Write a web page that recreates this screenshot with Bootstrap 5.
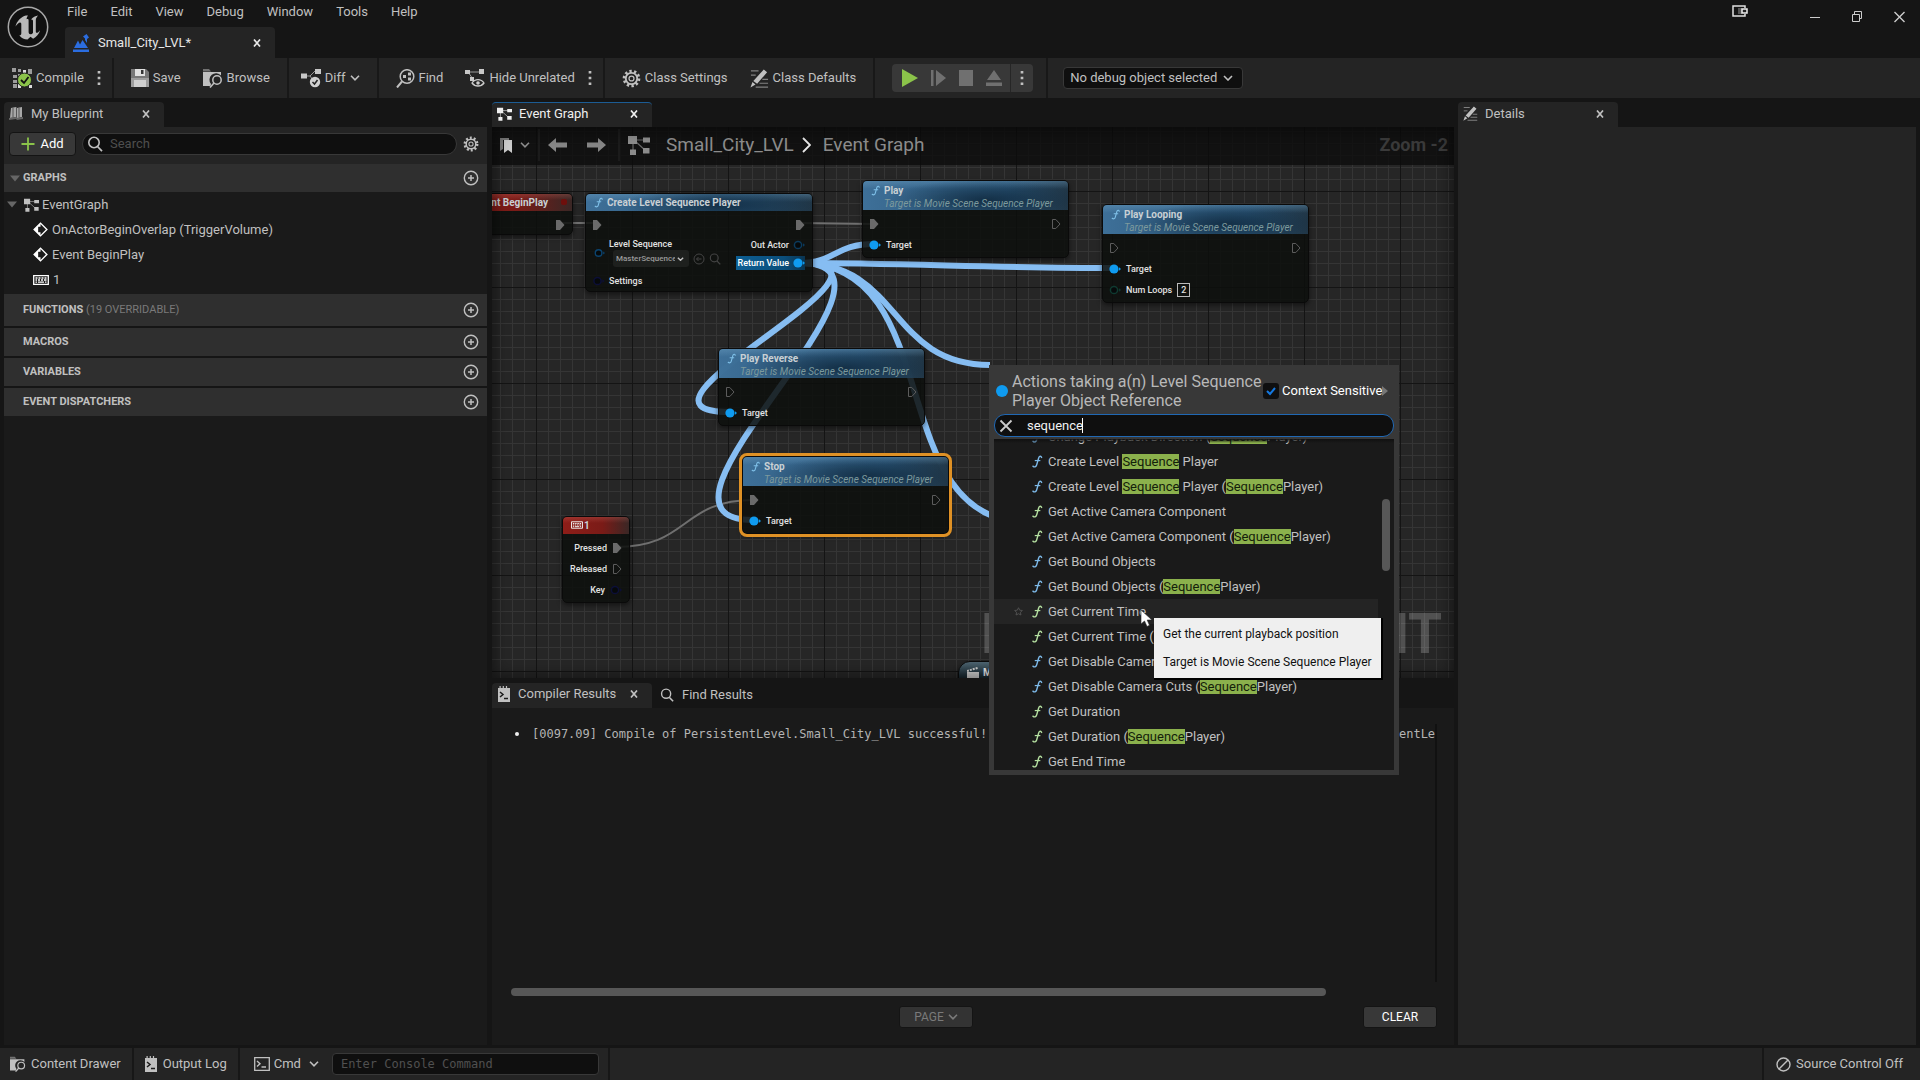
<!DOCTYPE html>
<html lang="en">
<head>
<meta charset="utf-8">
<meta name="viewport" content="width=device-width, initial-scale=1">
<title>Small_City_LVL - Level Blueprint</title>
<link href="https://cdn.jsdelivr.net/npm/bootstrap@5.3.0/dist/css/bootstrap.min.css" rel="stylesheet">
<style>
:root{--ink:#c0c0c0;--dim:#808080;--back:#151515;--panel:#242424;--recess:#1a1a1a;--head:#2f2f2f;--input:#0f0f0f;--blue:#0f9bf0}
body{font-family:Roboto,"Noto Sans",sans-serif;font-size:13px;line-height:16px;background:var(--back);color:var(--ink);height:100vh;overflow:hidden}
svg{flex:none;display:block}
button,input,select{font:inherit;color:inherit}
.plain-btn{background:none;border:0;padding:0;display:flex;align-items:center;gap:4px;white-space:nowrap}
a.menu-link{color:var(--ink);text-decoration:none}

/* title bar */
.title-bar{height:58px;position:relative}
.ue-logo{margin:6px 0 0 7px}
.menu-links{height:27px;padding:4px 0 0 18px}
.menu-links li{margin-right:23px}
.doc-tab{width:210px;height:31px;margin-left:16px;padding:0 14px 0 8px;background:var(--panel);border-radius:4px 4px 0 0;color:#e6e6e6}
.win-btns{gap:32px;padding:11px 15px 0 0}
.cast-btn{margin:-6px 30px 0 0}

/* toolbar */
.tool-bar{height:40px;background:var(--panel)}
.tool-group{padding:0 6px;border-right:2px solid #181818}
.tool-group .plain-btn{padding:0 11px;height:100%}
.tool-group .plain-btn.dots{padding:0 5px 0 2px}
.tool-group.first .plain-btn:first-child{padding-left:6px}
.tool-group.slim .plain-btn{padding-left:6px}
.play-wrap{padding:0 13px 0 17px;border-right:2px solid #181818}
.play-set{height:28px;background:#383838;border-radius:4px;gap:13px;padding-left:10px}
.play-set .play-more{height:28px;margin-left:-5px;padding:0 9px;border-left:1px solid #262626}
.debug-pick{width:180px;height:22px;margin-left:15px;padding:0 6px;appearance:none;background:var(--input) url("data:image/svg+xml,%3Csvg xmlns='http://www.w3.org/2000/svg' viewBox='0 0 10 6'%3E%3Cpath d='M1 1l4 4 4-4' fill='none' stroke='%23c0c0c0' stroke-width='1.6'/%3E%3C/svg%3E") no-repeat right 9px center/10px 6px;border:1px solid #383838;border-radius:4px}

/* dock */
.dock{flex:1 1 0;min-height:0;gap:4px;padding:4px 4px 3px}
.dock-left{flex:483 1 0;min-width:0}
.dock-mid{flex:962 1 0;min-width:0;margin-left:1px}
.dock-right{flex:458 1 0;min-width:0}
.dock-tab{width:160px;height:25px;padding:0 14px 2px 5px;background:var(--panel);border-radius:4px 4px 0 0;gap:7px}
.dock-tab.lit{border-top:1px solid #1c5c94;color:#f0f0f0}
.dock-tab .plain-btn{margin-left:auto}

/* my blueprint */
.find-row{height:37px;background:var(--panel);padding:4px 8px 8px 5px;gap:6px}
.add-btn{width:67px;height:24px;background:#383838;border:1px solid #141414;border-radius:4px;color:#fff;display:flex;align-items:center;justify-content:center;gap:5px;padding:0}
.search-pill{flex:1;height:22px;background:var(--input);border:1px solid #383838;border-radius:11px;gap:7px;padding:0 4px}
.search-pill input{background:none;border:0;outline:0;flex:1;min-width:0;padding:0}
.search-pill input::placeholder{color:#4e4e4e;opacity:1}
.cat-head{height:28px;margin-top:2px;background:var(--head);padding:0 8px 0 19px;font-size:11px;font-weight:700;color:var(--ink)}
.cat-head.tall{height:32px;margin-top:0}
.cat-head.open{padding-left:6px;gap:3px;margin-top:0}
.cat-head .soft{font-weight:400;color:#7a7a7a}
.cat-head .plain-btn{margin-left:auto}
.tree{background:var(--recess);height:102px}
.tree li{height:25px;gap:4px}
.tree .root{padding-left:3px;gap:3px}
.tree .leaf{padding-left:29px}
.fill-rest{flex:1;background:var(--recess)}
.fill-rest.raised{background:var(--panel)}

/* graph */
.graph-box{flex:550 1 0;min-height:0;position:relative}
.graph-canvas{position:absolute;inset:0;overflow:hidden;background-color:#262626;
background-image:linear-gradient(90deg,#141414 1px,transparent 1px),linear-gradient(#141414 1px,transparent 1px),linear-gradient(90deg,#353535 1px,transparent 1px),linear-gradient(#353535 1px,transparent 1px);
background-size:96px 96px,96px 96px,12px 12px,12px 12px;background-position:44px 64px,44px 64px,8px 4px,8px 4px}
.graph-canvas::after{content:"";position:absolute;inset:0;box-shadow:inset 0 0 14px 3px rgba(0,0,0,.45);pointer-events:none}
.wires{position:absolute;left:0;top:0;overflow:visible}
.water{position:absolute;right:12px;bottom:9px;font:700 55px/70px Roboto,sans-serif;color:rgba(255,255,255,.2);white-space:nowrap}
.crumbs{position:relative;height:38px;background:rgba(12,12,12,.78);padding:0 6px 2px 8px;font-size:19px;line-height:24px;color:#8c8c8c}
.crumbs .cut{width:2px;height:32px;background:#1b1b1b}
.zoom-tag{color:#3a3a3a;font-weight:700;font-size:18px}

.bp-node{position:absolute;width:207px;font-size:9px;font-weight:500;line-height:12px;color:#e2e2e2;border-radius:5px;border:1px solid #0a0a0a;background:rgba(13,15,13,.86);box-shadow:0 2px 5px rgba(0,0,0,.5)}
.bp-head{height:29px;padding:3px 4px 0 21px;border-radius:4px 4px 0 0;position:relative;font-weight:700;font-size:10px;line-height:13px;color:#c9d0d4;background:radial-gradient(ellipse 100px 20px at 60% 65%,rgba(14,38,58,.8),transparent),linear-gradient(rgba(120,170,205,.35),transparent 8px),linear-gradient(90deg,rgba(66,120,164,.92),rgba(45,92,130,.9) 70%,rgba(36,60,78,.9))}
.bp-head svg{position:absolute;left:8px;top:4px}
.bp-head em{display:block;font-size:10px;line-height:13px;font-weight:400;color:#7d9a9d;white-space:nowrap}
.bp-head.one-line{height:17px;padding-top:2px}
.bp-head.one-line svg{top:3px}
.bp-head.red{background:linear-gradient(rgba(220,120,110,.25),transparent 6px),linear-gradient(90deg,#8e1d18,#7a1b17 60%,#3a2725)}
.red-dot{position:absolute;right:5px;top:5px;width:6px;height:6px;border-radius:2px;background:#6e0f0c}
.bp-body{padding:3px 7px 2px 6px}
.bp-row{height:21px;gap:5px}
.asset-pick{padding:3px 0 3px 2px}
.asset-pick .seq-line{padding-left:4px}
.out-row{height:19px;margin-bottom:2px;gap:4px}
.n-begin{left:-60px;top:66px;width:141px;height:42px}
.n-create{left:93px;top:66px;width:228px}
.n-create .bp-body{padding-bottom:0}
.n-play{left:370px;top:53px}
.n-loop{left:610px;top:77px}
.n-rev{left:226px;top:221px}
.n-stop{left:250px;top:329px;outline:3px solid #df9125}
.n-key{left:70px;top:389px;width:68px}
.n-cine{left:466px;top:534px;height:40px;border-radius:12px 5px 5px 5px;background:linear-gradient(#4d6470,#16242c 16px);padding:5px 8px;font-weight:700;font-size:10px}
.seq-pick{appearance:none;width:76px;height:17px;padding:0 14px 0 3px;font-size:8px;color:#9a9a9a;border:0;border-radius:3px;background:#1e201e url("data:image/svg+xml,%3Csvg xmlns='http://www.w3.org/2000/svg' viewBox='0 0 10 6'%3E%3Cpath d='M1 1l4 4 4-4' fill='none' stroke='%23c0c0c0' stroke-width='2'/%3E%3C/svg%3E") no-repeat right 5px center/7px 4px}
.ret-val{background:linear-gradient(90deg,#0d5f94,#0b4e7a 70%,#0a3450);height:14px;padding-left:2px;color:#fff}
.loop-num{width:13px;height:14px;padding:0;border:1px solid #bbb;background:none;text-align:center;line-height:12px}

/* action menu */
.act-menu{position:absolute;z-index:5;left:497px;top:238px;width:410px;padding:5px;background:#383838;color:var(--ink)}
.act-top{height:44px;padding:0 3px 2px 0}
.act-title{font-size:16px;line-height:19px;margin:0;width:251px;color:#b8b8b8;font-weight:400}
.act-dot{width:12px;height:12px;border-radius:50%;background:var(--blue);flex:none;margin:0 4px 0 2px}
.ctx-box{appearance:none;width:16px;height:16px;margin:0 3px 0 0;border-radius:3px;background:#0f0f0f url("data:image/svg+xml,%3Csvg xmlns='http://www.w3.org/2000/svg' viewBox='0 0 16 16'%3E%3Cpath d='M4 8l3 3 5-6' fill='none' stroke='%231478e0' stroke-width='2'/%3E%3C/svg%3E") center/16px 16px}
.act-menu .search-pill{border:1px solid #2068b4;height:23px;gap:14px;color:#f2f2f2}
.act-search{position:relative}
.caret-bar{position:absolute;left:88px;top:4px;width:1px;height:15px;background:#fff}
.act-list{height:331px;margin-top:2px;overflow:hidden;background:var(--recess);position:relative;padding:0 16px 0 0}
.act-list::before{content:"";position:absolute;inset:0 0 auto;height:4px;background:linear-gradient(#101010,transparent)}
.act-list ul{margin:-15px 0 0}
.act-menu .act-row{width:100%;height:25px;padding:0 0 0 37px;gap:5px}
.act-menu .act-row.hot{background:#242424;padding-left:20px;gap:8px}
.act-row.hot .fn-gap{margin-right:-3px}
.hl{background:#8bb14c;color:#14200a;display:inline-block;height:15px;line-height:15px}
.v-thumb{position:absolute;right:4px;top:60px;width:8px;height:72px;border-radius:4px;background:#575757}
.tip{position:absolute;z-index:6;left:662px;top:491px;width:227px;height:60px;background:#efefef;color:#111;padding:8px 9px;font-size:12px;box-shadow:1px 1px 0 1px #000}
.tip p{margin:0 0 12px;white-space:nowrap}
.mouse{position:absolute;z-index:7;left:648px;top:482px}

/* compiler results */
.log-box{flex:362 1 0;min-height:0;margin-top:5px}
.log-panel{flex:1;background:var(--recess);min-height:0;padding:16px 17px 17px 17px}
.log-text{flex:1;overflow:hidden;font:12px/20px "DejaVu Sans Mono","Liberation Mono",monospace;white-space:pre;color:#b4b4b4;border-right:2px solid #111;padding:0 0 0 6px;margin:0}
.log-text li{list-style:none}
.dotmark{flex:none;width:4px;height:4px;border-radius:50%;background:#eee;margin-right:13px}
.h-track{height:8px;margin:6px 0 10px 2px}
.h-thumb{width:88%;height:8px;border-radius:4px;background:#575757}
.foot-btn{height:22px;width:74px;border:1px solid #141414;background:#383838;border-radius:3px;color:#fff;padding:0;font-size:12px}
.foot-btn:disabled{color:#7a7a7a;background:#333}

/* status bar */
.status-bar{height:32px;background:var(--panel)}
.status-bar .status-cell{border-right:2px solid #171717;padding:0 11px 0 10px;gap:5px}
.status-bar .cmd-cell{padding:0 9px 0 14px}
.status-bar .src-cell{border-right:0;border-left:2px solid #171717;padding:0 17px 0 12px}
.cmd-box{width:267px;height:22px;background:var(--input);border:1px solid #383838;border-radius:4px;padding:0 8px;font-family:"DejaVu Sans Mono","Liberation Mono",monospace;font-size:12px}
.cmd-box::placeholder{color:#505050;opacity:1}
</style>
<script src="https://cdn.jsdelivr.net/npm/bootstrap@5.3.0/dist/js/bootstrap.bundle.min.js"></script>
</head>
<body class="d-flex flex-column">

<svg width="0" height="0" class="position-absolute" aria-hidden="true">
 <symbol id="fn" viewBox="0 0 12 14"><path d="M11 2.6C10.300.8 8.400 1 7.800 3.200L5.600 10.800C5 12.900 3.200 13.400 1.600 12" fill="none" stroke="currentColor" stroke-width="1.500" stroke-linecap="round"/><path d="M3.600 6h6" stroke="currentColor" stroke-width="1.300"/></symbol>
 <symbol id="x" viewBox="0 0 8 8"><path d="M1 .5l6 7M7 .5l-6 7" stroke="currentColor" stroke-width="1.700"/></symbol>
 <symbol id="chev" viewBox="0 0 10 6"><path d="M1 .8l4 4 4-4" fill="none" stroke="currentColor" stroke-width="1.600"/></symbol>
 <symbol id="dots" viewBox="0 0 4 18"><path d="M.5 1h3v3h-3zM.5 7.500h3v3h-3zM.5 14h3v3h-3z" fill="currentColor"/></symbol>
 <symbol id="plus" viewBox="0 0 16 16"><circle cx="8" cy="8" r="6.700" fill="none" stroke="currentColor" stroke-width="1.400"/><path d="M8 5v6M5 8h6" stroke="currentColor" stroke-width="1.500"/></symbol>
 <symbol id="mag" viewBox="0 0 16 16"><circle cx="7" cy="6.500" r="5.200" fill="none" stroke="currentColor" stroke-width="1.600"/><path d="M10.500 10.500l4.500 4.700" stroke="currentColor" stroke-width="1.800"/></symbol>
 <symbol id="gear" viewBox="0 0 20 20"><circle cx="10" cy="10" r="7.600" fill="none" stroke="currentColor" stroke-width="3.400" stroke-dasharray="2.400 2.375"/><circle cx="10" cy="10" r="6" fill="none" stroke="currentColor" stroke-width="1.900"/><circle cx="10" cy="10" r="2.600" fill="none" stroke="currentColor" stroke-width="1.300"/></symbol>
 <symbol id="graph" viewBox="0 0 22 20"><path d="M6 5h12M5 6v12M7 6l11 10" stroke="currentColor" stroke-width="1.200" opacity=".7"/><path d="M0 1h9v8H0zM15 2.500h7v5h-7zM2 14.500h6V20H2zM15 13h6.500v5.500H15z" fill="currentColor"/></symbol>
 <symbol id="keys" viewBox="0 0 16 10"><path d="M.7.7h14.600v8.600H.7z" fill="none" stroke="currentColor" stroke-width="1.300"/><path d="M2.500 3h2M5.500 3h2M8.500 3h2M11.500 3h2M2.500 5h1.500M5 5h2M8 5h2M11 5h2.500M2.500 7.200h1.500M5 7.200h6M12 7.200h1.500" stroke="currentColor" stroke-width="1.300"/></symbol>
 <symbol id="event" viewBox="0 0 16 16"><path d="M8 1.200L14.800 8 8 14.800 1.200 8z" fill="none" stroke="currentColor" stroke-width="1.500"/><path d="M8 1L1 8l7 7v-4H5.500V5H8z" fill="currentColor"/></symbol>
 <symbol id="pencil" viewBox="0 0 20 20"><path d="M1 2h8M1 6.500h5M13 11h6M10 15h9M6 19h13" stroke="currentColor" stroke-width="1.300" opacity=".6"/><path d="M14.500.5l3.500 3L7.500 15.500l-4-3zM2.600 13.800l3.200 2.500L.5 19.500z" fill="currentColor"/></symbol>
 <symbol id="folder" viewBox="0 0 20 20"><path d="M0 1h6l2 2.500H0z" fill="currentColor" opacity=".5"/><path d="M0 4h18v3.500A6 6 0 008 16l-.5 2H0z" fill="currentColor"/><circle cx="14" cy="12" r="4.200" fill="#242424" stroke="currentColor" stroke-width="1.500"/><path d="M11 15l-4 4.500" stroke="currentColor" stroke-width="1.600"/></symbol>
 <symbol id="log" viewBox="0 0 12 16"><path d="M0 2h1.500V0h1.200v2h2V0h1.200v2h2V0h1.200v2H12v14H0z" fill="currentColor"/><path d="M2 6l3 2.500L2 11M6 12.500h4" fill="none" stroke="#1c1c1c" stroke-width="1.500"/></symbol>
 <symbol id="tri" viewBox="0 0 10 7"><path d="M0 .5h10L5 6.500z" fill="#666"/></symbol>
 <symbol id="pinOn" viewBox="0 0 10 12"><path d="M1 1h4l4.500 5L5 11H1z" fill="#6a6a6a"/></symbol>
 <symbol id="pinOff" viewBox="0 0 10 12"><path d="M1.500 1.500h3.300L9 6l-4.200 4.500H1.500z" fill="none" stroke="#5c5c5c"/></symbol>
 <symbol id="pinObj" viewBox="0 0 12 10"><circle cx="5" cy="5" r="4.600" fill="#0f9bf0"/><path d="M10 3.300l2 1.700-2 1.700z" fill="#0f9bf0"/></symbol>
 <symbol id="pinRing" viewBox="0 0 12 10"><circle cx="5" cy="5" r="3.600" fill="#06090a" stroke="currentColor" stroke-width="1.500"/><path d="M10 3.300l2 1.700-2 1.700z" fill="currentColor"/></symbol>
</svg>

<header class="title-bar d-flex">
 <svg class="ue-logo" width="42" height="42" viewBox="0 0 42 42" role="img" aria-label="Unreal Engine"><circle cx="21" cy="21" r="19.700" fill="#101010" stroke="#a8a8a8" stroke-width="1.500"/><path d="M19 9.500c-5 1.200-9.500 6-10.500 11 1.500-2.300 3.300-4 4.600-4 .9 0 1.200.7 1.200 1.800v9c0 1.500-.8 2.200-2 2 2.200 3 5 4.200 8.200 4.200l3-2.800 2.600 2c3.200-1.500 6-4.800 7-8.500-1.300 1.700-2.500 2.600-3.300 2.600-.7 0-1-.5-1-1.500V14c0-1.500 1-3.200 2.400-4.500-2.800.5-5.400 1.800-7.200 4 1.500-.3 2 .5 2 1.800v11.400c-.7 1-1.600 1.500-2.600 1.500-1.300 0-1.800-1-1.800-2.500V14.500c0-1.500-.9-1.700-2.100-1.200.1-1.500.6-2.800 1.500-3.800z" fill="#b9b9b9"/></svg>
 <div class="flex-grow-1">
  <ul class="menu-links d-flex list-unstyled mb-0">
   <li><a class="menu-link" href="#">File</a></li><li><a class="menu-link" href="#">Edit</a></li><li><a class="menu-link" href="#">View</a></li><li><a class="menu-link" href="#">Debug</a></li><li><a class="menu-link" href="#">Window</a></li><li><a class="menu-link" href="#">Tools</a></li><li><a class="menu-link" href="#">Help</a></li>
  </ul>
  <div class="doc-tab d-flex align-items-center justify-content-between">
   <span class="d-flex align-items-center gap-2"><svg width="17" height="18" viewBox="0 0 17 18"><path d="M1 14l4-7.500 2 4 2.500-4.500L15 14zM0 15.500h16V18H0z" fill="#2b6de0"/><path d="M10 2.500L13.500 0 16 3.500 14 5v4l-2-3V4.500z" fill="#2b6de0"/></svg>Small_City_LVL*</span>
   <button class="plain-btn" aria-label="Close tab"><svg width="8" height="8"><use href="#x"/></svg></button>
  </div>
 </div>
 <div class="win-btns d-flex align-items-start">
  <button class="plain-btn cast-btn" aria-label="Display"><svg width="16" height="12" viewBox="0 0 16 12"><path d="M13 3V1H1v10h12V9" fill="none" stroke="#e0e0e0" stroke-width="1.500"/><path d="M6 3h4v6H6z" fill="#555"/><path d="M10 4h5v4h-5z" fill="#222" stroke="#eee" stroke-width="1.500"/></svg></button>
  <button class="plain-btn" aria-label="Minimize"><svg width="10" height="11" viewBox="0 0 10 11"><path d="M0 6.500h10" stroke="#ccc"/></svg></button>
  <button class="plain-btn" aria-label="Restore"><svg width="10" height="11" viewBox="0 0 10 11"><path d="M.5 3.500h7v7h-7zM2.500 3.500v-3h7v7h-2" fill="none" stroke="#ccc"/></svg></button>
  <button class="plain-btn" aria-label="Close"><svg width="11" height="12" viewBox="0 0 11 12"><path d="M.5 1l10 10M10.500 1l-10 10" stroke="#ccc" stroke-width="1.400"/></svg></button>
 </div>
</header>

<div class="tool-bar d-flex align-items-center">
 <div class="tool-group first d-flex h-100">
  <button class="plain-btn"><svg width="20" height="20" viewBox="0 0 20 20"><path d="M0 0h4v4H0zM6 1h3v3H6zM16 1h4v5h-4zM1 7h4v3H1zM6 6h4v4H6zM1 12h4v3H1zM1 16h4v4H1z" fill="#9c9c9c"/><path d="M11 2h3v3h-3zM6 16h3v4H6zM17 17h3v3h-3z" fill="#ddd"/><circle cx="12.500" cy="12" r="7" fill="#8bc34a" stroke="#242424"/><path d="M9 12l3 3 4.500-6" fill="none" stroke="#111" stroke-width="1.800"/></svg>Compile</button>
  <button class="plain-btn dots" aria-label="Compile options"><svg width="4" height="16"><use href="#dots"/></svg></button>
 </div>
 <div class="tool-group d-flex h-100">
  <button class="plain-btn"><svg width="18" height="18" viewBox="0 0 18 18"><path d="M0 0h15l3 3v7H0z" fill="#777"/><path d="M4 0h10v7H4z" fill="#e0e0e0"/><path d="M10 1h2.500v4H10z" fill="#333"/><path d="M0 9h18v9H0z" fill="#9d9d9d"/><path d="M3 11h12v7H3z" fill="#cfcfcf"/></svg>Save</button>
  <button class="plain-btn"><svg width="20" height="20"><use href="#folder"/></svg>Browse</button>
 </div>
 <div class="tool-group slim d-flex h-100">
  <button class="plain-btn"><svg width="20" height="20" viewBox="0 0 20 20"><path d="M3 8h6l5-5M9 8l3 4" fill="none" stroke="#999"/><path d="M0 5.500h6v5H0zM14 1h6v5h-6z" fill="#c8c8c8"/><circle cx="14" cy="14" r="5.200" fill="#d0d0d0"/><path d="M11.500 14l2 2 3-4" fill="none" stroke="#222" stroke-width="1.500"/></svg>Diff<svg width="10" height="6"><use href="#chev"/></svg></button>
 </div>
 <div class="tool-group d-flex h-100">
  <button class="plain-btn"><svg width="19" height="19" viewBox="0 0 19 19"><circle cx="11" cy="7.500" r="6.800" fill="none" stroke="#c0c0c0" stroke-width="1.500"/><path d="M6 12.500L1 18.500" stroke="#c0c0c0" stroke-width="2"/><path d="M7 6h3v3H7zM12 3.500h3v3h-3zM12 8.500h3v3h-3zM10 7h2" fill="#c0c0c0"/></svg>Find</button>
  <button class="plain-btn"><svg width="20" height="20" viewBox="0 0 20 20"><path d="M3 4h12M3 4l5 7" stroke="#999"/><path d="M0 2h5v4H0zM14 1h5v5h-5zM5 9h4v4H5z" fill="#c8c8c8"/><path d="M7 15c3-4.500 9-4.500 12 0-3 4-9 4-12 0z" fill="#242424" stroke="#ccc" stroke-width="1.300"/><circle cx="13" cy="15" r="1.800" fill="#ccc"/></svg>Hide Unrelated</button>
  <button class="plain-btn dots" aria-label="Hide options"><svg width="4" height="16"><use href="#dots"/></svg></button>
 </div>
 <div class="tool-group d-flex h-100">
  <button class="plain-btn"><svg width="19" height="19"><use href="#gear"/></svg>Class Settings</button>
  <button class="plain-btn"><svg width="19" height="19"><use href="#pencil"/></svg>Class Defaults</button>
 </div>
 <div class="play-wrap d-flex h-100 align-items-center">
  <div class="play-set d-flex align-items-center">
   <button class="plain-btn" aria-label="Play"><svg width="16" height="18" viewBox="0 0 16 18"><path d="M0 0l16 9-16 9z" fill="#8bc34a"/></svg></button>
   <button class="plain-btn" aria-label="Step"><svg width="15" height="16" viewBox="0 0 15 16"><path d="M0 0h2.500v16H0zM5 0l10 8-10 8z" fill="#707070"/></svg></button>
   <button class="plain-btn" aria-label="Stop"><svg width="14" height="16"><path d="M0 0h14v16H0z" fill="#707070"/></svg></button>
   <button class="plain-btn" aria-label="Eject"><svg width="16" height="16" viewBox="0 0 16 16"><path d="M8 0l7 10H1zM0 12.500h16V16H0z" fill="#707070"/></svg></button>
   <button class="plain-btn play-more" aria-label="Play options"><svg width="4" height="16"><use href="#dots"/></svg></button>
  </div>
 </div>
 <select class="debug-pick" aria-label="Debug object"><option>No debug object selected</option></select>
</div>

<main class="dock d-flex">
 <section class="dock-left d-flex flex-column">
  <div class="dock-tab d-flex align-items-center"><svg width="15" height="15" viewBox="0 0 15 15"><path d="M2 2l5-1 1 1 5-1v10l-5 1-1-1-6 1z" fill="#a8a8a8"/><path d="M4 2v9M10 2v9M7.500 1v11" stroke="#555"/><path d="M0 12l7-1 1 1 6-1v2l-6 1-1-1-7 1z" fill="#666"/></svg>My Blueprint<button class="plain-btn" aria-label="Close My Blueprint"><svg width="8" height="8"><use href="#x"/></svg></button></div>
  <div class="find-row d-flex align-items-center">
   <button class="add-btn"><svg width="14" height="14" viewBox="0 0 14 14"><path d="M7 .5v13M.5 7h13" stroke="#8bc34a" stroke-width="1.800"/></svg>Add</button>
   <label class="search-pill d-flex align-items-center"><svg width="16" height="16"><use href="#mag"/></svg><input type="text" placeholder="Search" aria-label="Search blueprint"></label>
   <button class="plain-btn" aria-label="Settings"><svg width="16" height="16"><use href="#gear"/></svg></button>
  </div>
  <div class="cat-head open d-flex align-items-center"><svg width="10" height="7"><use href="#tri"/></svg>GRAPHS<button class="plain-btn" aria-label="Add graph"><svg width="16" height="16"><use href="#plus"/></svg></button></div>
  <ul class="tree list-unstyled mb-0">
   <li class="root d-flex align-items-center"><svg width="10" height="7" class="me-1"><use href="#tri"/></svg><svg width="15" height="14"><use href="#graph"/></svg>EventGraph</li>
   <li class="leaf d-flex align-items-center"><svg width="15" height="15" color="#fff"><use href="#event"/></svg>OnActorBeginOverlap (TriggerVolume)</li>
   <li class="leaf d-flex align-items-center"><svg width="15" height="15" color="#fff"><use href="#event"/></svg>Event BeginPlay</li>
   <li class="leaf d-flex align-items-center"><svg width="16" height="10" color="#fff"><use href="#keys"/></svg>1</li>
  </ul>
  <div class="cat-head tall d-flex align-items-center">FUNCTIONS&nbsp;<span class="soft">(19 OVERRIDABLE)</span><button class="plain-btn" aria-label="Add function"><svg width="16" height="16"><use href="#plus"/></svg></button></div>
  <div class="cat-head d-flex align-items-center">MACROS<button class="plain-btn" aria-label="Add macro"><svg width="16" height="16"><use href="#plus"/></svg></button></div>
  <div class="cat-head d-flex align-items-center">VARIABLES<button class="plain-btn" aria-label="Add variable"><svg width="16" height="16"><use href="#plus"/></svg></button></div>
  <div class="cat-head d-flex align-items-center">EVENT DISPATCHERS<button class="plain-btn" aria-label="Add dispatcher"><svg width="16" height="16"><use href="#plus"/></svg></button></div>
  <div class="fill-rest"></div>
 </section>

 <section class="dock-mid d-flex flex-column">
  <div class="dock-tab lit d-flex align-items-center"><svg width="15" height="14"><use href="#graph"/></svg>Event Graph<button class="plain-btn" aria-label="Close Event Graph"><svg width="8" height="8"><use href="#x"/></svg></button></div>
  <div class="graph-box">
   <div class="graph-canvas">
    <div class="water">LEVEL BLUEPRINT</div>
    <svg class="wires" width="962" height="550" fill="none">
     <g transform="translate(-492 -127)">
      <g stroke="#6f6f6f" stroke-width="2"><path d="M558 223H598M799 223L874 224"/><path d="M616 547C690 547 680 500 754 500"/></g>
      <g stroke="#86bdf2" stroke-width="6">
       <path d="M800 263C835 263 835 244 874 244"/>
       <path d="M800 263C900 263 1000 268 1114 268"/>
       <path d="M800 263C932 263 598 412 730 412"/>
       <path d="M800 263C936 263 617 520 753 520"/>
       <path d="M800 263C902 263 888 365 990 365"/>
       <path d="M800 263C950 263 880 523 1030 523"/>
      </g>
     </g>
    </svg>

    <div class="bp-node n-begin"><div class="bp-head one-line red text-end pe-4">Event BeginPlay<span class="red-dot"></span></div><div class="bp-body"><div class="bp-row d-flex align-items-center justify-content-end"><svg width="10" height="12"><use href="#pinOn"/></svg></div></div></div>

    <div class="bp-node n-create">
     <div class="bp-head one-line"><svg width="9" height="11" color="#7fc0e8"><use href="#fn"/></svg>Create Level Sequence Player</div>
     <div class="bp-body">
      <div class="bp-row d-flex align-items-center justify-content-between"><svg width="10" height="12"><use href="#pinOn"/></svg><svg width="10" height="12"><use href="#pinOn"/></svg></div>
      <div class="d-flex justify-content-between">
       <div>
        <div class="asset-pick d-flex align-items-center gap-1"><svg width="11" height="10" color="#0b4470"><use href="#pinRing"/></svg>
         <div><label for="seq" class="d-block">Level Sequence</label><div class="seq-line d-flex align-items-center gap-1"><select id="seq" class="seq-pick"><option>MasterSequence</option></select><svg width="12" height="12" viewBox="0 0 12 12" fill="none" stroke="#444"><circle cx="6" cy="6" r="5"/><path d="M8.500 6h-5M5.500 4l-2 2 2 2"/></svg><svg width="12" height="12" color="#444"><use href="#mag"/></svg></div></div></div>
        <div class="bp-row d-flex align-items-center gap-1"><svg width="13" height="10" color="#0c0f38"><use href="#pinRing"/></svg>Settings</div>
       </div>
       <div>
        <div class="out-row d-flex align-items-center justify-content-end">Out Actor<svg width="12" height="10" color="#0b3a5c"><use href="#pinRing"/></svg></div>
        <div class="ret-val d-flex align-items-center gap-1">Return Value<svg width="12" height="10"><use href="#pinObj"/></svg></div>
       </div>
      </div>
     </div>
    </div>

    <div class="bp-node n-play">
     <div class="bp-head"><svg width="9" height="11" color="#7fc0e8"><use href="#fn"/></svg>Play<em>Target is Movie Scene Sequence Player</em></div>
     <div class="bp-body"><div class="bp-row d-flex align-items-center justify-content-between"><svg width="10" height="12"><use href="#pinOn"/></svg><svg width="10" height="12"><use href="#pinOff"/></svg></div><div class="bp-row d-flex align-items-center"><svg width="12" height="10"><use href="#pinObj"/></svg>Target</div></div>
    </div>

    <div class="bp-node n-loop">
     <div class="bp-head"><svg width="9" height="11" color="#7fc0e8"><use href="#fn"/></svg>Play Looping<em>Target is Movie Scene Sequence Player</em></div>
     <div class="bp-body"><div class="bp-row d-flex align-items-center justify-content-between"><svg width="10" height="12"><use href="#pinOff"/></svg><svg width="10" height="12"><use href="#pinOff"/></svg></div><div class="bp-row d-flex align-items-center"><svg width="12" height="10"><use href="#pinObj"/></svg>Target</div><div class="bp-row d-flex align-items-center"><svg width="12" height="10" color="#0f3a30"><use href="#pinRing"/></svg><label for="loops">Num Loops</label><input id="loops" class="loop-num" value="2"></div></div>
    </div>

    <div class="bp-node n-rev">
     <div class="bp-head"><svg width="9" height="11" color="#7fc0e8"><use href="#fn"/></svg>Play Reverse<em>Target is Movie Scene Sequence Player</em></div>
     <div class="bp-body"><div class="bp-row d-flex align-items-center justify-content-between"><svg width="10" height="12"><use href="#pinOff"/></svg><svg width="10" height="12"><use href="#pinOff"/></svg></div><div class="bp-row d-flex align-items-center"><svg width="12" height="10"><use href="#pinObj"/></svg>Target</div></div>
    </div>

    <div class="bp-node n-stop">
     <div class="bp-head"><svg width="9" height="11" color="#7fc0e8"><use href="#fn"/></svg>Stop<em>Target is Movie Scene Sequence Player</em></div>
     <div class="bp-body"><div class="bp-row d-flex align-items-center justify-content-between"><svg width="10" height="12"><use href="#pinOn"/></svg><svg width="10" height="12"><use href="#pinOff"/></svg></div><div class="bp-row d-flex align-items-center"><svg width="12" height="10"><use href="#pinObj"/></svg>Target</div></div>
    </div>

    <div class="bp-node n-key">
     <div class="bp-head one-line red"><svg width="12" height="10" color="#eee"><use href="#keys"/></svg>1</div>
     <div class="bp-body"><div class="bp-row d-flex align-items-center justify-content-end">Pressed<svg width="10" height="12"><use href="#pinOn"/></svg></div><div class="bp-row d-flex align-items-center justify-content-end">Released<svg width="10" height="12"><use href="#pinOff"/></svg></div><div class="bp-row d-flex align-items-center justify-content-end">Key<svg width="12" height="10" color="#0c0f38"><use href="#pinRing"/></svg></div></div>
    </div>

    <div class="bp-node n-cine d-flex gap-1"><svg width="12" height="12" viewBox="0 0 12 12"><path d="M0 5h12v7H0z" fill="#ccc"/><path d="M0 4L11 .8" stroke="#ccc" stroke-width="2" stroke-dasharray="2 1"/></svg>MasterSequence</div>

    <div class="crumbs d-flex align-items-center">
     <button class="plain-btn gap-2" aria-label="Bookmarks"><svg width="12" height="16" viewBox="0 0 12 16"><path d="M0 1h9v2H3v9l-3 2z" fill="#777"/><path d="M4 3h8v13l-4-3-4 3z" fill="#ccc"/></svg><svg width="10" height="6"><use href="#chev"/></svg></button>
     <span class="cut ms-2 me-2"></span>
     <button class="plain-btn me-3" aria-label="Back"><svg width="19" height="16" viewBox="0 0 19 16" fill="#858585"><path d="M0 8l8-7v4.500h11v5H8V15z"/></svg></button>
     <button class="plain-btn ms-1 me-2" aria-label="Forward"><svg width="19" height="16" viewBox="0 0 19 16" fill="#858585"><path d="M19 8l-8-7v4.500H0v5h11V15z"/></svg></button>
     <span class="cut ms-1 me-2"></span>
     <svg width="22" height="20" class="me-1"><use href="#graph"/></svg>
     <span class="ms-2 ps-1">Small_City_LVL</span>
     <svg width="9" height="16" viewBox="0 0 9 16" class="ms-2 me-2"><path d="M1 1l7 7-7 7" fill="none" stroke="#e8e8e8" stroke-width="1.800"/></svg>
     <span class="ps-1">Event Graph</span>
     <span class="zoom-tag ms-auto">Zoom -2</span>
    </div>
   </div>

   <div class="act-menu">
    <div class="act-top d-flex align-items-center">
     <span class="act-dot"></span>
     <h2 class="act-title">Actions taking a(n) Level Sequence Player Object Reference</h2>
     <input type="checkbox" id="ctx" class="ctx-box" checked><label for="ctx" class="text-white text-nowrap">Context Sensitive</label>
     <svg width="6" height="10" viewBox="0 0 6 10"><path d="M0 0l6 5-6 5z" fill="#777"/></svg>
    </div>
    <div class="act-search"><div class="search-pill d-flex align-items-center"><button class="plain-btn" aria-label="Clear search"><svg width="14" height="14" viewBox="0 0 14 14"><path d="M1.500 1.500l11 11M12.500 1.500l-11 11" stroke="#ccc" stroke-width="1.800"/></svg></button><input type="text" value="sequence" aria-label="Search actions"></div><span class="caret-bar"></span></div>
    <div class="act-list">
     <ul class="list-unstyled" id="acts"></ul>
     <div class="v-thumb"></div>
    </div>
   </div>
   <div class="tip" role="tooltip"><p>Get the current playback position</p><p>Target is Movie Scene Sequence Player</p></div>
   <svg class="mouse" width="14" height="20" viewBox="0 0 14 20"><path d="M1 1v14l3.500-3 2.500 5.500 2.500-1.200L7.200 11H12z" fill="#fff" stroke="#222" stroke-width=".6"/></svg>
  </div>

  <div class="log-box d-flex flex-column">
   <div class="d-flex">
    <div class="dock-tab d-flex align-items-center"><svg width="14" height="16"><use href="#log"/></svg>Compiler Results<button class="plain-btn" aria-label="Close Compiler Results"><svg width="8" height="8"><use href="#x"/></svg></button></div>
    <button class="plain-btn ps-2 gap-2"><svg width="14" height="14"><use href="#mag"/></svg>Find Results</button>
   </div>
   <div class="log-panel d-flex flex-column">
    <ul class="log-text"><li class="d-flex align-items-center"><span class="dotmark"></span>[0097.09] Compile of PersistentLevel.Small_City_LVL successful! [in 127 ms] (/Game/Small_City_LVL.Small_City_LVL:PersistentLevel.Small_City_LVL)</li></ul>
    <div class="h-track"><div class="h-thumb"></div></div>
    <div class="d-flex">
     <div class="flex-grow-1 d-flex justify-content-center"><button class="foot-btn d-flex align-items-center justify-content-center gap-1" disabled>PAGE<svg width="10" height="6"><use href="#chev"/></svg></button></div>
     <button class="foot-btn">CLEAR</button>
    </div>
   </div>
  </div>
 </section>

 <section class="dock-right d-flex flex-column">
  <div class="dock-tab d-flex align-items-center"><svg width="15" height="15"><use href="#pencil"/></svg>Details<button class="plain-btn" aria-label="Close Details"><svg width="8" height="8"><use href="#x"/></svg></button></div>
  <div class="fill-rest raised"></div>
 </section>
</main>

<footer class="status-bar d-flex">
 <button class="plain-btn status-cell"><svg width="16" height="16"><use href="#folder"/></svg>Content Drawer</button>
 <button class="plain-btn status-cell"><svg width="14" height="16"><use href="#log"/></svg>Output Log</button>
 <div class="status-cell cmd-cell d-flex align-items-center">
  <button class="plain-btn me-2"><svg width="16" height="14" viewBox="0 0 16 14"><path d="M.7.7h14.600v12.600H.7z" fill="none" stroke="#c0c0c0" stroke-width="1.300"/><path d="M3 4l3 2.700L3 9.500M7.500 10h4.500" fill="none" stroke="#c0c0c0" stroke-width="1.400"/></svg>Cmd<svg width="10" height="6" class="ms-1"><use href="#chev"/></svg></button>
  <input class="cmd-box" type="text" placeholder="Enter Console Command" aria-label="Console command">
 </div>
 <button class="plain-btn status-cell src-cell ms-auto"><svg width="15" height="15" viewBox="0 0 15 15" fill="none" stroke="#c0c0c0" stroke-width="1.400"><circle cx="7.500" cy="7.500" r="6.500"/><path d="M3 12l9-9"/></svg>Source Control Off</button>
</footer>

<script>
// Each action: [colour of the function glyph, label]; the typed filter is highlighted wherever it occurs.
const blue = '#7db9e8', green = '#b4dfa0';
const actions = [
 [blue, 'Change Playback Direction (SequencePlayer)'], [blue, 'Create Level Sequence Player'], [blue, 'Create Level Sequence Player (SequencePlayer)'],
 [green, 'Get Active Camera Component'], [green, 'Get Active Camera Component (SequencePlayer)'],
 [blue, 'Get Bound Objects'], [blue, 'Get Bound Objects (SequencePlayer)'],
 [green, 'Get Current Time', 'hot'], [green, 'Get Current Time (SequencePlayer)'],
 [blue, 'Get Disable Camera Cuts'], [blue, 'Get Disable Camera Cuts (SequencePlayer)'],
 [green, 'Get Duration'], [green, 'Get Duration (SequencePlayer)'], [green, 'Get End Time']
];
const star = '<svg width="9" height="9" viewBox="0 0 10 10"><path d="M5 .8l1.300 2.700 3 .4-2.200 2 .6 3L5 7.500 2.300 8.900l.6-3-2.200-2 3-.4z" fill="none" stroke="#555"/></svg>';
document.getElementById('acts').innerHTML = actions.map(([c, label, hot]) =>
 `<li><button class="plain-btn act-row ${hot || ''}">${hot ? star : ''}<svg class="fn-gap" width="12" height="13" color="${c}"><use href="#fn"/></svg><span>${label.replace(/Sequence/g, '<span class="hl">Sequence</span>')}</span></button></li>`).join('');
</script>
</body>
</html>
